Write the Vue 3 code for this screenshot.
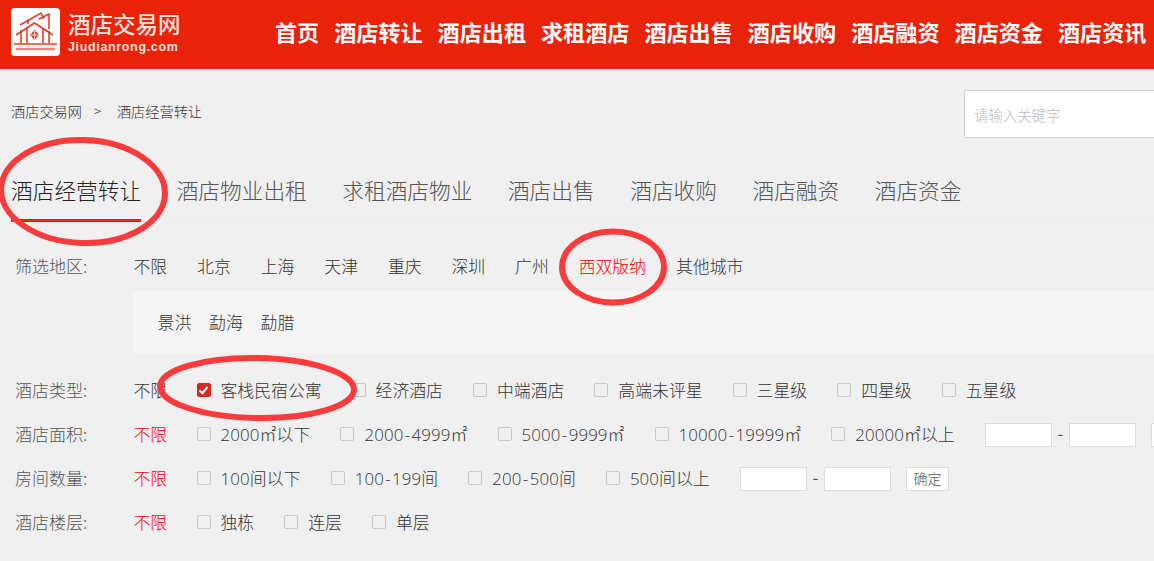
<script setup>
const nav = ['首页','酒店转让','酒店出租','求租酒店','酒店出售','酒店收购','酒店融资','酒店资金','酒店资讯']
const tabs = ['酒店经营转让','酒店物业出租','求租酒店物业','酒店出售','酒店收购','酒店融资','酒店资金']
const cities = ['不限','北京','上海','天津','重庆','深圳','广州','西双版纳','其他城市']
const subs = ['景洪','勐海','勐腊']
const types = ['客栈民宿公寓','经济酒店','中端酒店','高端未评星','三星级','四星级','五星级']
const areas = ['2000㎡以下','2000-4999㎡','5000-9999㎡','10000-19999㎡','20000㎡以上']
const rooms = ['100间以下','100-199间','200-500间','500间以上']
const floors = ['独栋','连层','单层']
</script>

<template>
  <div class="page">
    <header class="head">
      <div class="logo">
        <svg class="mark" width="49" height="48" viewBox="0 0 49 48">
          <rect width="49" height="48" rx="4" fill="#fff"/>
          <g fill="none" stroke="#ea3a26" stroke-width="1.6">
            <path d="M5 27 L23.5 15 L42 27"/>
            <path d="M9 17 L30 5 L33 11"/>
            <path d="M28 11 L38 6 V21"/>
            <path d="M17 11 V16"/>
            <path d="M10 22 V35 M16 20 V35 M32 20 V35 M38 23 V35"/>
            <path d="M3 36 H46"/>
          </g>
          <path d="M5 41 H44" stroke="#f0867a" stroke-width="2.4"/>
          <path d="M23.5 22 L28 27 L23.5 32 L19 27 Z" fill="#ea3a26"/>
          <path d="M23.5 23 V31 M20 27 H27" stroke="#fff" stroke-width="0.8"/>
        </svg>
        <div class="logo-text">
          <div class="logo-cn">酒店交易网</div>
          <div class="logo-en">Jiudianrong.com</div>
        </div>
      </div>
      <nav class="nav">
        <a v-for="n in nav" :key="n">{{ n }}</a>
      </nav>
    </header>

    <div class="crumb-row">
      <div class="crumb"><span>酒店交易网</span><span class="sep">&gt;</span><span>酒店经营转让</span></div>
      <div class="search">请输入关键字</div>
    </div>

    <div class="tabs">
      <a v-for="(t, i) in tabs" :key="t" :class="{ on: i === 0 }">{{ t }}</a>
    </div>

    <div class="filter first">
      <span class="label">筛选地区:</span>
      <div class="cities">
        <a v-for="c in cities" :key="c" :class="{ red: c === '西双版纳' }">{{ c }}</a>
      </div>
    </div>
    <div class="subs">
      <a v-for="s in subs" :key="s">{{ s }}</a>
    </div>

    <div class="filter types">
      <span class="label">酒店类型:</span>
      <span class="any">不限</span>
      <label v-for="(t, i) in types" :key="t" class="opt"><i class="box" :class="{ checked: i === 0 }"></i>{{ t }}</label>
    </div>
    <div class="filter">
      <span class="label">酒店面积:</span>
      <span class="any red">不限</span>
      <label v-for="t in areas" :key="t" class="opt"><i class="box"></i><span class="num"><template v-for="(p, j) in t.split('-')" :key="j"><span v-if="j" class="hy">-</span>{{ p }}</template></span></label>
      <span class="range area-range"><i class="inp"></i><b>-</b><i class="inp"></i><i class="inp"></i></span>
    </div>
    <div class="filter">
      <span class="label">房间数量:</span>
      <span class="any red">不限</span>
      <label v-for="t in rooms" :key="t" class="opt"><i class="box"></i><span class="num"><template v-for="(p, j) in t.split('-')" :key="j"><span v-if="j" class="hy">-</span>{{ p }}</template></span></label>
      <span class="range"><i class="inp"></i><b>-</b><i class="inp"></i><span class="ok">确定</span></span>
    </div>
    <div class="filter">
      <span class="label">酒店楼层:</span>
      <span class="any red">不限</span>
      <label v-for="t in floors" :key="t" class="opt"><i class="box"></i>{{ t }}</label>
    </div>

    <svg class="marks" width="1154" height="561" viewBox="0 0 1154 561">
      <g fill="none" stroke="#fb3b3b" stroke-width="6">
        <ellipse cx="83" cy="191.5" rx="82" ry="51.5" transform="rotate(2 83 191.5)"/>
        <ellipse cx="613" cy="267" rx="51" ry="35.5"/>
        <ellipse cx="257" cy="388" rx="97" ry="30" transform="rotate(1 257 388)"/>
      </g>
    </svg>
  </div>
</template>

<style>
html, body { margin: 0; background: #f0f0f0; overflow: hidden; }
</style>

<style scoped>
.page {
  position: relative;
  width: 1154px;
  height: 561px;
  overflow: hidden;
  background: #f0f0f0;
  color: #333;
  font-family: "Noto Sans CJK SC", "Noto Sans", sans-serif;
  font-weight: 300;
}
.head {
  height: 69px;
  background: #e9230a;
  display: flex;
  align-items: flex-start;
  white-space: nowrap;
}
.logo { display: flex; margin: 8px 0 0 11px; width: 264px; }
.mark { flex: none; }
.logo-text { margin-left: 8px; color: #fbe3df; }
.logo-cn { font-size: 22.5px; font-weight: 500; line-height: 26px; margin-top: 2px; }
.logo-en {
  font-family: "Liberation Sans", sans-serif;
  font-weight: 700;
  font-size: 12.5px;
  line-height: 14px;
  margin-top: 4px;
  letter-spacing: 0.65px;
}
.nav {
  display: flex;
  gap: 15px;
  color: #fff;
  font-size: 22.1px;
  font-weight: 700;
  line-height: 63px;
}
.crumb-row {
  position: relative;
  height: 87px;
}
.crumb {
  display: flex;
  padding: 33px 0 0 11px;
  font-size: 14.2px;
  line-height: 18px;
  color: #333;
}
.sep { margin: 0 16px 0 12px; font-size: 13px; }
.search {
  position: absolute;
  left: 964px;
  top: 21px;
  width: 200px;
  height: 48px;
  box-sizing: border-box;
  padding-left: 9px;
  background: #fff;
  border: 1px solid #d2d2d2;
  border-radius: 2px;
  font-size: 14.4px;
  line-height: 47px;
  color: #bbb;
}
.tabs {
  display: flex;
  gap: 35.5px;
  height: 65px;
  margin-left: 11px;
  border-bottom: 1px solid #ececec;
  font-size: 21.7px;
  line-height: 68px;
  color: #555;
  white-space: nowrap;
}
.tabs a { height: 65px; box-sizing: content-box; }
.tabs .on { color: #222; border-bottom: 3px solid #e9230a; height: 63px; }
.filter {
  display: flex;
  align-items: center;
  height: 44px;
  margin-left: 15px;
  font-size: 16.85px;
  white-space: nowrap;
}
.filter.first { margin-top: 21px; }
.label { width: 118.5px; color: #555; flex: none; font-size: 17px; }
.cities { display: flex; gap: 29.9px; color: #333; }
.red { color: #f00 !important; }
.subs {
  display: flex;
  gap: 17.5px;
  margin: 4px 0 0 133px;
  height: 62px;
  box-sizing: border-box;
  padding: 0 0 2px 24.5px;
  align-items: center;
  background: #f5f5f5;
  border-radius: 3px 0 0 3px;
  font-size: 17px;
  color: #333;
}
.types { margin-top: 14px; }
.any { width: 63px; flex: none; color: #333; }
.opt {
  display: flex;
  align-items: center;
  margin-right: 30px;
  color: #333;
  font-family: "Open Sans", "Noto Sans CJK SC", sans-serif;
}
.num { letter-spacing: 0.13px; }
.hy { margin: 0 1.3px; }
.box {
  flex: none;
  width: 14px;
  height: 14px;
  box-sizing: border-box;
  margin: 2px 10px 0 0;
  border: 1px solid #c8c8c8;
  border-radius: 2px;
  background: #f0f0f0;
}
.checked {
  border-color: #d22a1e;
  background: #d22a1e;
  position: relative;
}
.checked::after {
  content: "";
  position: absolute;
  left: 3px;
  top: 1px;
  width: 3px;
  height: 7px;
  border: solid #fff;
  border-width: 0 2px 2px 0;
  transform: rotate(40deg);
}
.range { display: flex; align-items: center; margin-top: 4px; }
.range b { width: 17px; margin-bottom: 5px; text-align: center; font-weight: 400; color: #555; }
.inp {
  display: block;
  flex: none;
  width: 67px;
  height: 24px;
  box-sizing: border-box;
  background: #fff;
  border: 1px solid #ddd;
}
.area-range .inp:last-child { margin-left: 15px; }
.ok {
  margin-left: 15px;
  width: 43px;
  height: 24px;
  box-sizing: border-box;
  text-align: center;
  background: #fff;
  border: 1px solid #ddd;
  font-size: 14px;
  line-height: 21px;
  color: #555;
}
.marks { position: absolute; left: 0; top: 0; pointer-events: none; }
</style>
